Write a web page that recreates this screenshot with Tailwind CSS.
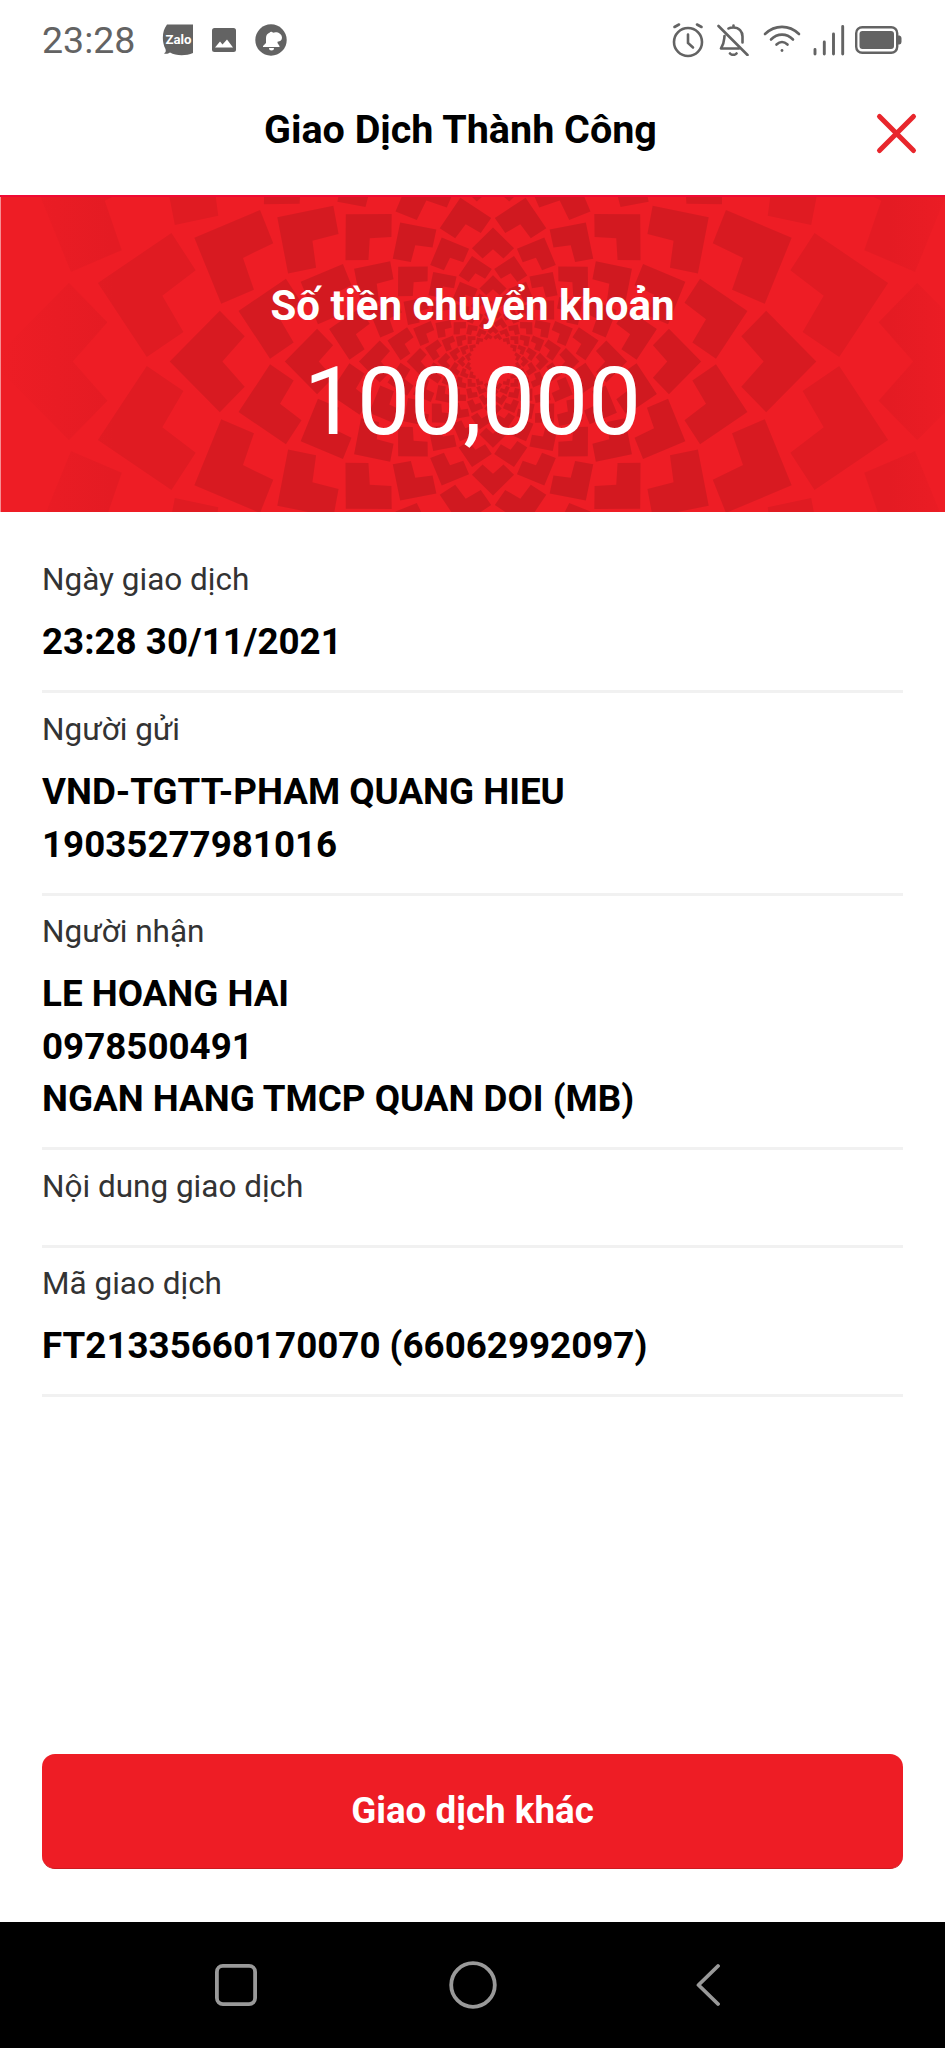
<!DOCTYPE html>
<html lang="vi">
  <head>
    <meta charset="UTF-8" />
    <meta name="viewport" content="width=device-width, initial-scale=1.0" />
    <title>Giao Dịch Thành Công</title>
    <script src="https://cdn.jsdelivr.net/npm/@tailwindcss/browser@4"></script>
  </head>
  <body class="bg-white font-['Roboto',sans-serif]">
    <div class="flex h-[2048px] w-[945px] flex-col overflow-hidden">
      <!-- Status bar -->
      <div class="flex h-20 shrink-0 items-center pr-[43px] pl-[42px] text-[#636363]">
        <span class="w-[92px] text-[37.5px] leading-[80px] font-normal whitespace-nowrap">23:28</span>
        <svg class="ml-[28px] h-8 w-8" viewBox="0 0 32 32">
          <path fill="currentColor" d="M5 .5H31V29C24 32 14 32 8 28.500C6 30 4 30 2 29.500C4 28 4 27 3.500 25C-.5 17 0 7 5 .5Z" />
          <text x="3.500" y="20" fill="#fff" font-size="13.500" font-weight="700" textLength="26" lengthAdjust="spacingAndGlyphs">Zalo</text>
        </svg>
        <svg class="ml-[18px] h-6 w-6" viewBox="0 0 24 24">
          <rect width="24" height="24" rx="2.500" fill="currentColor" />
          <path fill="#fff" d="M3 19.500L8 13.500L10.500 16.500L15 11.500L21 19.500Z" />
        </svg>
        <svg class="ml-[19px] h-8 w-8" viewBox="0 0 32 32">
          <circle cx="16" cy="16" r="15.700" fill="currentColor" />
          <path fill="#fff" d="M8 22L11 19V14C11 11 12.500 9.500 14.500 8.800A2 2 0 0 1 18 8.800C21 7 27 9 27 13.500C27 16 25.500 17.500 22.500 17.800V19L24.500 22V23H8ZM14 24H19A2.500 2.500 0 0 1 14 24Z" />
        </svg>
        <div class="grow"></div>
        <svg class="h-9 w-8" viewBox="0 0 32 36" fill="none" stroke="currentColor" stroke-width="2.600" stroke-linecap="round">
          <circle cx="16" cy="20" r="14" />
          <path d="M16 12.500V21L21 25.500M2.500 5L7 2.500M25 2.500L29.500 5" />
        </svg>
        <svg class="ml-[13px] h-8 w-8" viewBox="0 0 32 32" fill="none" stroke="currentColor" stroke-width="2.600" stroke-linecap="round" stroke-linejoin="round">
          <path d="M1.500 2L30.500 31M7.500 12C7 16 7.500 19 4 24.500H22M11.500 4.500C13 3.500 15 3.500 16.500 3.500C22 3.500 25.500 7.500 25.500 12.500V18.500M16.500 1.500V3M13 29.500C14.500 31.300 18 31.300 19.500 29.500" />
        </svg>
        <svg class="ml-[14px] h-8 w-[38px]" viewBox="0 0 38 32" fill="none" stroke="currentColor" stroke-width="2.600" stroke-linecap="round">
          <path d="M2 10C12 .5 26 .5 36 10M8 15.500C14.500 9 23.500 9 30 15.500M13.500 20.500C17 17.300 21 17.300 24.500 20.500" />
          <circle cx="19" cy="26.500" r="1.400" fill="currentColor" stroke="none" />
        </svg>
        <svg class="ml-[12px] h-8 w-8" viewBox="0 0 32 32" stroke="currentColor" stroke-width="2.900" stroke-linecap="round">
          <path d="M2 25.500V30M11.300 18V30M20.500 10V30M29.700 2.500V30" />
        </svg>
        <svg class="ml-[10px] h-7 w-[47px]" viewBox="0 0 47 28">
          <rect x="1.200" y="1.200" width="41" height="25.600" rx="6" fill="none" stroke="currentColor" stroke-width="2.400" />
          <rect x="4.500" y="5" width="34.500" height="18" rx="3" fill="currentColor" />
          <path fill="currentColor" d="M42 9.500H44.500Q46.500 10 46.500 12V16Q46.500 18 44.500 18.500H42Z" />
        </svg>
      </div>

      <!-- Header -->
      <div class="flex h-[115px] shrink-0 items-start">
        <h1 class="grow pt-[23px] pl-[46px] text-center text-[39.5px] leading-[54px] font-bold text-black">Giao Dịch Thành Công</h1>
        <svg class="mt-8 mr-[27px] h-[43px] w-[43px]" viewBox="0 0 43 43" stroke="#e8262c" stroke-width="5" stroke-linecap="round">
          <path d="M4.500 4.500L38.500 38.500M38.500 4.500L4.500 38.500" />
        </svg>
      </div>

      <!-- Amount banner -->
      <div class="relative h-[317px] shrink-0 overflow-hidden border-t-2 border-[#f00a34] bg-[#ee1d25] text-center text-white">
        <svg class="absolute inset-0 h-[315px] w-[945px]" viewBox="0 197 945 315">
          <defs>
            <path id="tile" d="M1 0L.845 .157L.768 .078L.837 0L.768 -.078L.845 -.157Z" />
            <linearGradient id="edges">
              <stop offset="0" stop-color="#ee1d25" />
              <stop offset=".12" stop-color="#ee1d25" stop-opacity="0" />
              <stop offset=".94" stop-color="#ee1d25" stop-opacity="0" />
              <stop offset="1" stop-color="#ee1d25" stop-opacity=".7" />
            </linearGradient>
          </defs>
          <g id="pattern" fill="#000"></g>
          <rect y="197" width="945" height="315" fill="url(#edges)" />
        </svg>
        <div class="absolute inset-y-0 left-0 w-px bg-white/50"></div>
        <div class="relative pt-[82px]">
          <p class="text-[42px] leading-[54px] font-bold">Số tiền chuyển khoản</p>
          <p class="text-[94.5px] leading-[138px]">100,000</p>
        </div>
      </div>

      <!-- Details -->
      <div class="grow px-[42px] pt-[31.5px]">
        <div class="border-b-3 border-[#f1f1f1] pt-[14.5px] pb-[21.5px]">
          <p class="text-[31.5px] leading-[44px] text-[#333]">Ngày giao dịch</p>
          <div class="mt-[14.25px] text-[36.75px] leading-[52.5px] font-bold text-black">
            <p>23:28 30/11/2021</p>
          </div>
        </div>
        <div class="border-b-3 border-[#f1f1f1] pt-[14.5px] pb-[21.5px]">
          <p class="text-[31.5px] leading-[44px] text-[#333]">Người gửi</p>
          <div class="mt-[14.25px] text-[36.75px] leading-[52.5px] font-bold text-black">
            <p>VND-TGTT-PHAM QUANG HIEU</p>
            <p>19035277981016</p>
          </div>
        </div>
        <div class="border-b-3 border-[#f1f1f1] pt-[14.5px] pb-[21.5px]">
          <p class="text-[31.5px] leading-[44px] text-[#333]">Người nhận</p>
          <div class="mt-[14.25px] text-[36.75px] leading-[52.5px] font-bold text-black">
            <p>LE HOANG HAI</p>
            <p>0978500491</p>
            <p>NGAN HANG TMCP QUAN DOI (MB)</p>
          </div>
        </div>
        <div class="border-b-3 border-[#f1f1f1] pt-[14.5px] pb-[35.75px]">
          <p class="text-[31.5px] leading-[44px] text-[#333]">Nội dung giao dịch</p>
        </div>
        <div class="border-b-3 border-[#f1f1f1] pt-[14.5px] pb-[21.5px]">
          <p class="text-[31.5px] leading-[44px] text-[#333]">Mã giao dịch</p>
          <div class="mt-[14.25px] text-[36.75px] leading-[52.5px] font-bold text-black">
            <p>FT21335660170070 (66062992097)</p>
          </div>
        </div>
      </div>

      <div class="shrink-0 px-[42px] pb-[53px]">
        <button class="h-[115px] w-full rounded-[13px] border-b border-[#cc1a20] bg-[#ee1d25] text-[36.75px] font-bold text-white">Giao dịch khác</button>
      </div>

      <!-- Navigation bar -->
      <div class="flex h-[126px] shrink-0 items-center bg-black pl-[215px]">
        <svg class="h-[42px] w-[42px]" viewBox="0 0 42 42" fill="none" stroke="#999" stroke-width="3.800">
          <rect x="1.900" y="1.900" width="38.200" height="38.200" rx="6" />
        </svg>
        <svg class="ml-48 h-12 w-12" viewBox="0 0 48 48" fill="none" stroke="#999" stroke-width="3.800">
          <circle cx="24" cy="24" r="21.800" />
        </svg>
        <svg class="ml-[199px] h-11 w-6" viewBox="0 0 24 44" fill="none" stroke="#999" stroke-width="3.800" stroke-linecap="round" stroke-linejoin="round">
          <path d="M22 3L2.500 22L22 41" />
        </svg>
      </div>
    </div>

    <script>
      // Concentric rings of chevrons, each ring turned by half a step
      const pattern = document.getElementById("pattern");
      const opacities = [0.04, 0.06, 0.09, 0.1, 0.115];
      const step = 22.5;
      let radius = 502;

      for (let ring = 0; radius > 26; ring++) {
        for (let i = 0; i < 16; i++) {
          const tile = document.createElementNS(
            "http://www.w3.org/2000/svg",
            "use"
          );
          const angle = i * step + (ring % 2) * (step / 2);
          tile.setAttribute("href", "#tile");
          tile.setAttribute("opacity", opacities[ring] || 0.125);
          tile.setAttribute(
            "transform",
            `translate(493 361.5) rotate(${angle}) scale(${radius})`
          );
          pattern.appendChild(tile);
        }
        radius *= 0.8025;
      }
    </script>
  </body>
</html>
